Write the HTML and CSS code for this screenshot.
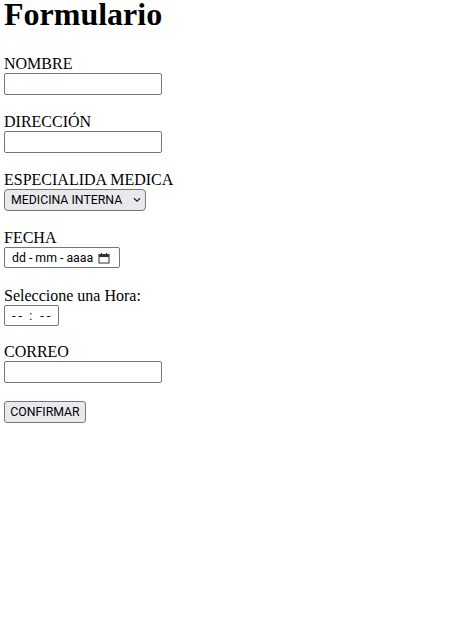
FILE: index.html
```html
<!DOCTYPE html>
<html lang="es">
<head>
<meta charset="utf-8">
<title>Formulario</title>
<link rel="stylesheet" href="styles.css">
</head>
<body>
<h1 class="title">Formulario</h1>
<form class="form">
  <div class="field">
    <label class="label" for="nombre">NOMBRE</label>
    <input class="text-input" id="nombre" type="text">
  </div>
  <div class="field">
    <label class="label" for="direccion">DIRECCIÓN</label>
    <input class="text-input" id="direccion" type="text">
  </div>
  <div class="field">
    <label class="label" for="especialidad">ESPECIALIDA MEDICA</label>
    <div class="select-wrap">
      <select class="select" id="especialidad">
        <option>MEDICINA INTERNA</option>
      </select>
      <svg class="chevron" width="8" height="6" viewBox="0 0 8 6" aria-hidden="true"><path d="M1 1.2 L4 4.2 L7 1.2" fill="none" stroke="#222" stroke-width="1.3"/></svg>
    </div>
  </div>
  <div class="field field-date">
    <label class="label">FECHA</label>
    <div class="fake-input date-input">
      <span class="date-text">dd - mm - aaaa</span>
      <svg class="cal" width="12" height="12" viewBox="0 0 12 12" aria-hidden="true">
        <rect x="1" y="2.5" width="10" height="8.5" fill="none" stroke="#333" stroke-width="1"/>
        <rect x="1" y="2.5" width="10" height="2.5" fill="#333"/>
        <rect x="3" y="1" width="1" height="2" fill="#333"/>
        <rect x="8" y="1" width="1" height="2" fill="#333"/>
      </svg>
    </div>
  </div>
  <div class="field field-time">
    <label class="label">Seleccione una Hora:</label>
    <div class="fake-input time-input">
      <span class="dashes">--</span><span class="colon">:</span><span class="dashes">--</span>
    </div>
  </div>
  <div class="field">
    <label class="label" for="correo">CORREO</label>
    <input class="text-input" id="correo" type="email">
  </div>
  <button class="btn" type="button">CONFIRMAR</button>
</form>
</body>
</html>
```

FILE: styles.css
```css
html, body {
  background: #ffffff;
}
body {
  margin: 0;
  padding: 0 4px;
  font-family: "Liberation Serif", "Times New Roman", serif;
  font-size: 16px;
  color: #000;
}
.title {
  margin: 0 0 27px;
  font-size: 32px;
  line-height: 28px;
  font-weight: 700;
}
.form {
  display: flex;
  flex-direction: column;
  align-items: flex-start;
}
.field {
  display: flex;
  flex-direction: column;
  align-items: flex-start;
  margin-bottom: 18px;
}
.field-date { margin-bottom: 19px; }
.field-time { margin-bottom: 17px; }
.label {
  display: block;
  line-height: 18px;
}
.text-input {
  box-sizing: border-box;
  width: 158px;
  height: 22px;
  margin: 0;
  padding: 1px 2px;
  border: 1px solid #767676;
  border-radius: 2px;
  background: #fff;
  font-family: Roboto, "Liberation Sans", sans-serif;
  font-size: 12.3px;
  outline: none;
}
.select-wrap {
  position: relative;
  display: flex;
}
.select {
  -webkit-appearance: none;
  appearance: none;
  box-sizing: border-box;
  width: 142px;
  height: 22px;
  margin: 0;
  padding: 0 0 0 6px;
  border: 1px solid #767676;
  border-radius: 4px;
  background: #e9e9ed;
  color: #000;
  font-family: Roboto, "Liberation Sans", sans-serif;
  font-size: 12.3px;
}
.chevron {
  position: absolute;
  left: 129px;
  top: 8px;
  pointer-events: none;
}
.fake-input {
  box-sizing: border-box;
  height: 21px;
  border: 1px solid #767676;
  border-radius: 2px;
  background: #fff;
  display: flex;
  align-items: center;
  font-family: Roboto, "Liberation Sans", sans-serif;
  font-size: 12.3px;
  color: #000;
}
.date-input {
  width: 116px;
  padding-left: 7px;
}
.date-text {
  white-space: pre;
}
.cal {
  margin-left: 5px;
}
.time-input {
  width: 55px;
  padding-left: 7px;
}
.dashes {
  letter-spacing: 3px;
  font-size: 13px;
}
.colon {
  margin: 0 8px 0 4px;
}
.btn {
  box-sizing: border-box;
  width: 82px;
  height: 22px;
  margin: 0;
  padding: 0;
  border: 1px solid #767676;
  border-radius: 3px;
  background: #e9e9ed;
  color: #000;
  font-family: Roboto, "Liberation Sans", sans-serif;
  font-size: 12.3px;
}
```
